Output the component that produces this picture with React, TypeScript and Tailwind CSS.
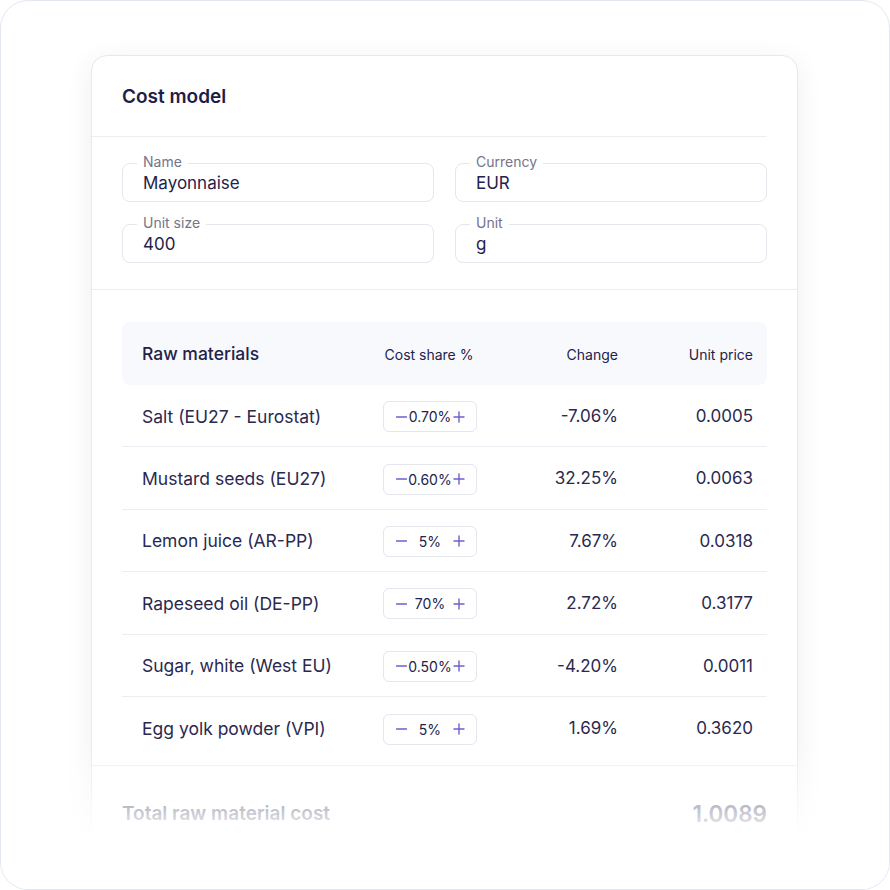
import React from "react";

interface Material {
  name: string;
  share: string;
  change: string;
  price: string;
}

const materials: Material[] = [
  { name: "Salt (EU27 - Eurostat)", share: "0.70%", change: "-7.06%", price: "0.0005" },
  { name: "Mustard seeds (EU27)", share: "0.60%", change: "32.25%", price: "0.0063" },
  { name: "Lemon juice (AR-PP)", share: "5%", change: "7.67%", price: "0.0318" },
  { name: "Rapeseed oil (DE-PP)", share: "70%", change: "2.72%", price: "0.3177" },
  { name: "Sugar, white (West EU)", share: "0.50%", change: "-4.20%", price: "0.0011" },
  { name: "Egg yolk powder (VPI)", share: "5%", change: "1.69%", price: "0.3620" },
];

const Field: React.FC<{ label: string; value: string }> = ({ label, value }) => (
  <div className="relative flex h-[39px] items-center rounded-lg border border-[#e4e6ee] pl-[20px] pt-[2px]">
    <span className="absolute -top-[11px] left-[14px] bg-white px-[6px] text-[14px] leading-[18px] text-[#74748a]">
      {label}
    </span>
    <span className="text-[17px] text-[#23224a]">{value}</span>
  </div>
);

const Minus = () => (
  <svg width="11" height="12" viewBox="0 0 11 12" className="shrink-0">
    <path d="M0.5 6h10" stroke="#6c5fd0" strokeWidth="1.4" strokeLinecap="round" />
  </svg>
);

const Plus = () => (
  <svg width="12" height="12" viewBox="0 0 12 12" className="shrink-0">
    <path d="M1 6h10M6 1v10" stroke="#6c5fd0" strokeWidth="1.4" strokeLinecap="round" />
  </svg>
);

const Stepper: React.FC<{ value: string }> = ({ value }) => (
  <div className="ml-px flex h-[31px] w-[94px] items-center justify-between rounded-md border border-[#e4e6ee] pl-[12px] pr-[11px]">
    <Minus />
    <span className="text-[14px] text-[#23224a]">{value}</span>
    <Plus />
  </div>
);

export default function App() {
  return (
    <div
      className="h-[890px] w-[890px] bg-white"
      style={{ fontFamily: "Inter, 'Noto Sans', sans-serif" }}
    >
      <div className="relative h-[890px] w-[890px] overflow-hidden rounded-[28px] border-[1.5px] border-[#e2e7f0] bg-white">
        {/* Cost model card */}
        <div className="ml-[90px] mt-[54px] w-[707px] rounded-2xl border border-[#e6e8ef] bg-white shadow-[0_6px_28px_rgba(30,35,70,0.07)]">
          <div className="mr-[30px] flex h-[81px] items-center border-b border-[#eceef4] pl-[30px] pt-[2px]">
            <h2 className="text-[19px] font-semibold text-[#1f1d47]">Cost model</h2>
          </div>

          <div className="grid grid-cols-2 gap-x-[21px] gap-y-[22px] border-b border-[#eceef4] px-[30px] pb-[26px] pt-[26px]">
            <Field label="Name" value="Mayonnaise" />
            <Field label="Currency" value="EUR" />
            <Field label="Unit size" value="400" />
            <Field label="Unit" value="g" />
          </div>

          {/* Raw materials table */}
          <div className="border-b border-[#eceef4] px-[30px] pb-[6px] pt-[32px]">
            <div className="grid h-[63px] grid-cols-[1fr_94px_142px_135px] items-center rounded-lg bg-[#f8f9fc] pl-[20px] pr-[14px] pt-[1px]">
              <span className="text-[17.5px] font-medium text-[#23224a]">Raw materials</span>
              <span className="text-center text-[14px] text-[#23224a]">Cost share %</span>
              <span className="text-right text-[14px] text-[#23224a]">Change</span>
              <span className="text-right text-[14px] text-[#23224a]">Unit price</span>
            </div>
            {materials.map((m, i) => (
              <div
                key={m.name}
                className={
                  "grid h-[62.4px] grid-cols-[1fr_94px_142px_135px] items-center pl-[20px] pr-[14px] pt-[2px] " +
                  (i < materials.length - 1 ? "border-b border-[#eceef4]" : "")
                }
              >
                <span className="text-[17.5px] text-[#2a2950]">{m.name}</span>
                <Stepper value={m.share} />
                <span className="text-right text-[17px] text-[#2a2950]">{m.change}</span>
                <span className="text-right text-[17px] text-[#2a2950]">{m.price}</span>
              </div>
            ))}
          </div>

          <div className="flex items-center justify-between px-[30px] pb-[40px] pt-[31px]">
            <span className="text-[19px] font-semibold text-[#2a2950]">Total raw material cost</span>
            <span className="text-[22.5px] font-semibold text-[#2a2950]">1.0089</span>
          </div>
        </div>

        {/* bottom fade */}
        <div className="pointer-events-none absolute bottom-0 left-0 h-[150px] w-full bg-[linear-gradient(to_bottom,rgba(255,255,255,0)_0%,rgba(255,255,255,0.76)_50%,#ffffff_66%)]" />
      </div>
    </div>
  );
}
